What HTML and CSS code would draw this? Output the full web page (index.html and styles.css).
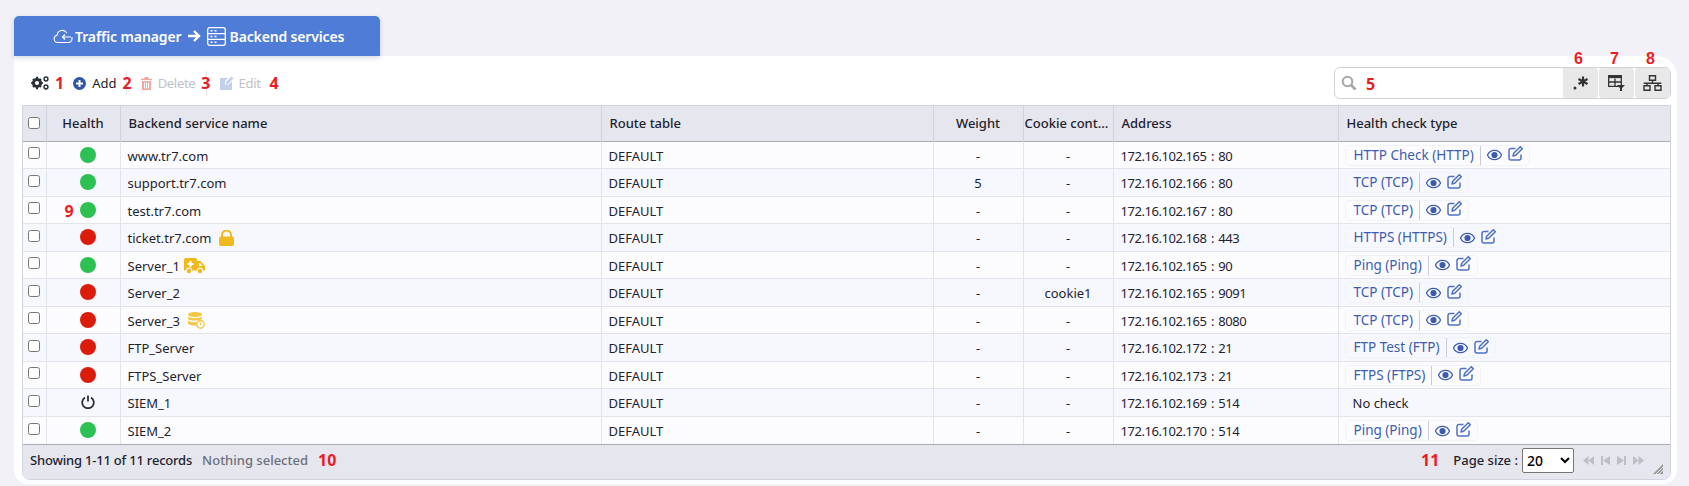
FILE: index.html
```html
<!DOCTYPE html>
<html lang="en">
<head>
  <meta charset="UTF-8">
  <title>Backend services</title>
  <link rel="stylesheet" href="styles.css">
</head>
<body>
  <svg class="defs" width="0" height="0">
    <symbol id="i-eye" viewBox="0 0 16 12"><path d="M8 1C4.500 1 1.800 3 .5 6c1.300 3 4 5 7.500 5s6.200-2 7.500-5C14.200 3 11.500 1 8 1z" fill="none" stroke="currentColor" stroke-width="1.400"/><circle cx="8" cy="6" r="3.300" fill="currentColor"/></symbol>
    <symbol id="i-edit" viewBox="0 0 15 15"><path d="M13 8.500V12a2 2 0 0 1-2 2H3a2 2 0 0 1-2-2V4.500a2 2 0 0 1 2-2h4.500" fill="none" stroke="currentColor" stroke-width="1.500"/><path d="M12.300.7l2 2-6.600 6.600-2.700.7.700-2.700z" fill="none" stroke="currentColor" stroke-width="1.500" stroke-linejoin="round"/></symbol>
  </svg>

  <div class="tab">
    <svg class="tab-cloud" width="20" height="16" viewBox="0 0 20 16"><path d="M6 14.500H4.500a3.700 3.700 0 0 1-.4-7.300A5.200 5.200 0 0 1 13.800 5M9 14.500h6.500a3.500 3.500 0 0 0 3.500-3.500V9" fill="none" stroke="currentColor" stroke-width="1.100"/><path d="M6 14.500h4M9.500 9H18M12 6.500L9.500 9l2.500 2.500" fill="none" stroke="currentColor" stroke-width="1.200"/></svg>
    <span>Traffic manager</span>
    <svg class="tab-arrow" width="14" height="14" viewBox="0 0 14 14"><path d="M1 7h10M7 2l5 5-5 5" fill="none" stroke="currentColor" stroke-width="2.400"/></svg>
    <svg class="tab-server" width="19" height="19" viewBox="0 0 19 19"><rect x=".7" y=".7" width="17.600" height="17.600" rx="2" fill="none" stroke="currentColor" stroke-width="1.300"/><path d="M1 6.700h17M1 12.300h17" stroke="currentColor" stroke-width="1.300"/><path d="M3.500 3.800h2M3.500 9.500h2M3.500 15.200h2M7.500 3.800h2M7.500 9.500h2M7.500 15.200h2" stroke="currentColor" stroke-width="1.400"/></svg>
    <span class="tab-last">Backend services</span>
  </div>

  <div class="card">
    <div class="toolbar">
      <button class="tool tool-gear">
        <svg width="18" height="14" viewBox="0 0 18 14"><circle cx="6" cy="7" r="3.600" fill="none" stroke="#2b2f3a" stroke-width="3"/><path d="M6 .8v2M6 11.200v2M.2 7h2M9.800 7h2M2 3l1.400 1.400M10 3L8.600 4.400M2 11l1.400-1.400M10 11L8.600 9.600" stroke="#2b2f3a" stroke-width="2"/><circle cx="15" cy="3" r="1.900" fill="none" stroke="#2b2f3a" stroke-width="1.500"/><circle cx="15" cy="11" r="1.900" fill="none" stroke="#2b2f3a" stroke-width="1.500"/></svg>
      </button>
      <span class="mark">1</span>
      <button class="tool tool-add">
        <svg width="13" height="13" viewBox="0 0 13 13"><circle cx="6.500" cy="6.500" r="6.500" fill="#2f55a4"/><path d="M6.500 3v7M3 6.500h7" stroke="#fff" stroke-width="2"/></svg>
        Add
      </button>
      <span class="mark">2</span>
      <button class="tool tool-delete" disabled>
        <svg width="11" height="13" viewBox="0 0 11 13"><path d="M0 1.700h11V3H0zM3.500 0h4v1.700h-4z" fill="#f3a6a0"/><path d="M1 4h9v9H1zM3 5.500v6h1v-6zM5 5.500v6h1v-6zM7 5.500v6h1v-6z" fill="#f3a6a0" fill-rule="evenodd"/></svg>
        Delete
      </button>
      <span class="mark">3</span>
      <button class="tool tool-edit" disabled>
        <svg width="15" height="14" viewBox="0 0 15 14"><path d="M1 2h8L6 5v3.500h3.500L13 5.500V14H1z" fill="#c4d0ea"/><path d="M7 6l5.500-5.500 2 2L9 8H7z" fill="#c4d0ea"/></svg>
        Edit
      </button>
      <span class="mark">4</span>

      <div class="search">
        <div class="search-box">
          <svg width="16" height="16" viewBox="0 0 16 16"><circle cx="6.500" cy="6.500" r="4.800" fill="none" stroke="#a6a6a6" stroke-width="2"/><path d="M10 10l4.500 4.500" stroke="#a6a6a6" stroke-width="2.500"/></svg>
          <span class="mark">5</span>
        </div>
        <button class="search-btn">
          <span class="mark mark-top">6</span>
          <svg width="16" height="15" viewBox="0 0 16 15"><circle cx="2" cy="13" r="1.500" fill="#333"/><path d="M10 1.500v10M5.500 4l9 5M14.500 4l-9 5" stroke="#333" stroke-width="2.200"/></svg>
        </button>
        <button class="search-btn">
          <span class="mark mark-top">7</span>
          <svg width="17" height="16" viewBox="0 0 17 16"><path d="M.7.700h12.600v10.600H.7zM7 3.500v7.800M.7 7h12.600" fill="none" stroke="#333" stroke-width="1.300"/><path d="M.7 2h12.600" stroke="#333" stroke-width="2.200"/><path d="M9 10h8l-3 3v3h-2v-3z" fill="#333"/></svg>
        </button>
        <button class="search-btn">
          <span class="mark mark-top">8</span>
          <svg width="19" height="16" viewBox="0 0 19 16"><path d="M6.500.7h6v4.600h-6zM1 10.700h6v4.600H1zM12 10.700h6v4.600h-6zM9.500 5.300v3M.7 8.300h17.600M4 8.300v2.400M15 8.300v2.400" fill="none" stroke="#333" stroke-width="1.400"/></svg>
        </button>
      </div>
    </div>

    <div class="grid">
      <table>
        <colgroup>
          <col class="col-check"><col class="col-health"><col class="col-name"><col class="col-route">
          <col class="col-weight"><col class="col-cookie"><col class="col-address"><col>
        </colgroup>
        <thead>
          <tr>
            <th class="center"><input type="checkbox"></th>
            <th class="center">Health</th>
            <th>Backend service name</th>
            <th>Route table</th>
            <th class="center">Weight</th>
            <th class="cut">Cookie cont...</th>
            <th>Address</th>
            <th>Health check type</th>
          </tr>
        </thead>
        <tbody>
          <tr>
            <td class="center"><input type="checkbox"></td>
            <td class="center"><span class="dot up"></span></td>
            <td>www.tr7.com</td>
            <td>DEFAULT</td><td class="center">-</td><td class="center">-</td>
            <td class="addr">172.16.102.165 : 80</td>
            <td><span class="check"><a>HTTP Check (HTTP)</a><svg class="eye"><use href="#i-eye"/></svg><svg class="pen"><use href="#i-edit"/></svg></span></td>
          </tr>
          <tr>
            <td class="center"><input type="checkbox"></td>
            <td class="center"><span class="dot up"></span></td>
            <td>support.tr7.com</td>
            <td>DEFAULT</td><td class="center">5</td><td class="center">-</td>
            <td class="addr">172.16.102.166 : 80</td>
            <td><span class="check"><a>TCP (TCP)</a><svg class="eye"><use href="#i-eye"/></svg><svg class="pen"><use href="#i-edit"/></svg></span></td>
          </tr>
          <tr>
            <td class="center"><input type="checkbox"></td>
            <td class="center health-cell"><span class="mark mark-nine">9</span><span class="dot up"></span></td>
            <td>test.tr7.com</td>
            <td>DEFAULT</td><td class="center">-</td><td class="center">-</td>
            <td class="addr">172.16.102.167 : 80</td>
            <td><span class="check"><a>TCP (TCP)</a><svg class="eye"><use href="#i-eye"/></svg><svg class="pen"><use href="#i-edit"/></svg></span></td>
          </tr>
          <tr>
            <td class="center"><input type="checkbox"></td>
            <td class="center"><span class="dot down"></span></td>
            <td>ticket.tr7.com <svg class="flag flag-lock" width="15" height="16" viewBox="0 0 15 16"><path d="M3 7V5a4.500 4.500 0 0 1 9 0v2" fill="none" stroke="#f0b91e" stroke-width="2"/><rect y="6.500" width="15" height="9.500" rx="2" fill="#f0b91e"/></svg></td>
            <td>DEFAULT</td><td class="center">-</td><td class="center">-</td>
            <td class="addr">172.16.102.168 : 443</td>
            <td><span class="check"><a>HTTPS (HTTPS)</a><svg class="eye"><use href="#i-eye"/></svg><svg class="pen"><use href="#i-edit"/></svg></span></td>
          </tr>
          <tr>
            <td class="center"><input type="checkbox"></td>
            <td class="center"><span class="dot up"></span></td>
            <td>Server_1 <svg class="flag flag-truck" width="21" height="16" viewBox="0 0 21 16"><path d="M1.500 0h10A1.500 1.500 0 0 1 13 1.500V3h3.500L21 8v4.500h-2a3 3 0 0 0-6 0H8a3 3 0 0 0-6 0H0V1.500A1.500 1.500 0 0 1 1.500 0z" fill="#f0b91e"/><path d="M6.500 3v6M3.500 6h6" stroke="#fff" stroke-width="2"/><path d="M15 5h1l2.500 3H15z" fill="#fff"/><circle cx="5" cy="13" r="2.200" fill="#f0b91e"/><circle cx="16" cy="13" r="2.200" fill="#f0b91e"/></svg></td>
            <td>DEFAULT</td><td class="center">-</td><td class="center">-</td>
            <td class="addr">172.16.102.165 : 90</td>
            <td><span class="check"><a>Ping (Ping)</a><svg class="eye"><use href="#i-eye"/></svg><svg class="pen"><use href="#i-edit"/></svg></span></td>
          </tr>
          <tr>
            <td class="center"><input type="checkbox"></td>
            <td class="center"><span class="dot down"></span></td>
            <td>Server_2</td>
            <td>DEFAULT</td><td class="center">-</td><td class="center">cookie1</td>
            <td class="addr">172.16.102.165 : 9091</td>
            <td><span class="check"><a>TCP (TCP)</a><svg class="eye"><use href="#i-eye"/></svg><svg class="pen"><use href="#i-edit"/></svg></span></td>
          </tr>
          <tr>
            <td class="center"><input type="checkbox"></td>
            <td class="center"><span class="dot down"></span></td>
            <td>Server_3 <svg class="flag flag-db" width="17" height="17" viewBox="0 0 17 17"><ellipse cx="7" cy="2.500" rx="7" ry="2.500" fill="#f2c744"/><path d="M0 4.500c2 2 12 2 14 0v2.500c-2 2-12 2-14 0zM0 8.500c2 2 9 2 10 1.500-1 1-1.500 2-1.500 3.500H7c-3 0-6-.5-7-2z" fill="#f2c744"/><circle cx="12.500" cy="12.500" r="3.700" fill="#fff" stroke="#f2c744" stroke-width="1.400"/><path d="M12.500 10.500v2.500" stroke="#f2c744" stroke-width="1.400"/></svg></td>
            <td>DEFAULT</td><td class="center">-</td><td class="center">-</td>
            <td class="addr">172.16.102.165 : 8080</td>
            <td><span class="check"><a>TCP (TCP)</a><svg class="eye"><use href="#i-eye"/></svg><svg class="pen"><use href="#i-edit"/></svg></span></td>
          </tr>
          <tr>
            <td class="center"><input type="checkbox"></td>
            <td class="center"><span class="dot down"></span></td>
            <td>FTP_Server</td>
            <td>DEFAULT</td><td class="center">-</td><td class="center">-</td>
            <td class="addr">172.16.102.172 : 21</td>
            <td><span class="check"><a>FTP Test (FTP)</a><svg class="eye"><use href="#i-eye"/></svg><svg class="pen"><use href="#i-edit"/></svg></span></td>
          </tr>
          <tr>
            <td class="center"><input type="checkbox"></td>
            <td class="center"><span class="dot down"></span></td>
            <td>FTPS_Server</td>
            <td>DEFAULT</td><td class="center">-</td><td class="center">-</td>
            <td class="addr">172.16.102.173 : 21</td>
            <td><span class="check"><a>FTPS (FTPS)</a><svg class="eye"><use href="#i-eye"/></svg><svg class="pen"><use href="#i-edit"/></svg></span></td>
          </tr>
          <tr>
            <td class="center"><input type="checkbox"></td>
            <td class="center"><svg class="power" width="14" height="14" viewBox="0 0 14 14"><path d="M4 2.500a5.800 5.800 0 1 0 6 0" fill="none" stroke="#2b2f3a" stroke-width="1.800"/><path d="M7 .5v6" stroke="#2b2f3a" stroke-width="1.800"/></svg></td>
            <td>SIEM_1</td>
            <td>DEFAULT</td><td class="center">-</td><td class="center">-</td>
            <td class="addr">172.16.102.169 : 514</td>
            <td class="no-check">No check</td>
          </tr>
          <tr>
            <td class="center"><input type="checkbox"></td>
            <td class="center"><span class="dot up"></span></td>
            <td>SIEM_2</td>
            <td>DEFAULT</td><td class="center">-</td><td class="center">-</td>
            <td class="addr">172.16.102.170 : 514</td>
            <td><span class="check"><a>Ping (Ping)</a><svg class="eye"><use href="#i-eye"/></svg><svg class="pen"><use href="#i-edit"/></svg></span></td>
          </tr>
        </tbody>
      </table>

      <div class="footer">
        <span class="records">Showing 1-11 of 11 records</span>
        <span class="muted">Nothing selected</span>
        <span class="mark">10</span>
        <span class="footer-right">
          <span class="mark">11</span>
          <label>Page size :</label>
          <select><option>20</option></select>
          <span class="pager">
            <svg width="11" height="9" viewBox="0 0 11 9"><path d="M5.500 0v9L0 4.500zM11 0v9L5.500 4.500z"/></svg>
            <svg width="9" height="9" viewBox="0 0 9 9"><path d="M0 0h2v9H0zM9 0v9L2 4.500z"/></svg>
            <svg width="9" height="9" viewBox="0 0 9 9"><path d="M9 0H7v9h2zM0 0v9l7-4.500z"/></svg>
            <svg width="11" height="9" viewBox="0 0 11 9"><path d="M0 0v9l5.500-4.500zM5.500 0v9L11 4.500z"/></svg>
          </span>
        </span>
        <svg class="grip" width="10" height="10" viewBox="0 0 10 10"><path d="M10 0v10H0z" fill="#9a9a9a"/><path d="M3 10L10 3M6 10l4-4" stroke="#e5e6ee" stroke-width="1"/></svg>
      </div>
    </div>
  </div>
</body>
</html>
```

FILE: styles.css
```css
* {
  box-sizing: border-box;
}
html, body {
  height: 100%;
}
body {
  margin: 0;
  padding: 16px 12px 2px 14px;
  background: #f1f1f7;
  font-family: "Noto Sans", "Open Sans", sans-serif;
  font-size: 13px;
  color: #1f232e;
  overflow: hidden;
}
.defs {
  position: absolute;
}
.tab {
  width: 366px;
  height: 40px;
  padding-left: 39px;
  background: #4f7cd6;
  border-radius: 5px 5px 0 0;
  box-shadow: 0 2px 5px rgba(40, 60, 110, 0.2);
  color: #fff;
  font-size: 14px;
  font-weight: 600;
  letter-spacing: -0.1px;
  display: flex;
  align-items: center;
  position: relative;
  z-index: 1;
}
.tab-cloud {
  margin-right: 2px;
}
.tab-arrow {
  margin: 0 6px 0 5px;
}
.tab-server {
  margin-right: 4px;
}
.tab-last {
  letter-spacing: -0.15px;
}
.card {
  background: #fff;
  border-radius: 0 20px 14px 14px;
  height: 428px;
  padding: 0 6px 5px 8px;
}
.toolbar {
  height: 49px;
  padding: 5px 0 0 9px;
  display: flex;
  align-items: center;
}
.tool {
  background: none;
  border: none;
  padding: 0;
  font: inherit;
  color: #1f232e;
  display: flex;
  align-items: center;
  gap: 6px;
  position: relative;
}
.tool:disabled {
  color: #bfc1c8;
}
.tool-delete::before, .tool-edit::before {
  content: "";
  position: absolute;
  top: -3px;
  bottom: -3px;
  width: 1px;
  background: #e4e5ea;
}
.tool-delete::before {
  left: -15px;
}
.tool-edit::before {
  left: -13px;
}
.tool-delete {
  letter-spacing: -0.3px;
}
.tool-edit {
  gap: 5px;
  letter-spacing: -0.3px;
}
.mark {
  font-size: 16px;
  font-weight: 700;
  color: #ed1c24;
  line-height: 1;
  letter-spacing: 0;
  position: relative;
  z-index: 1;
}
.tool-gear + .mark {
  margin: 0 9px 0 6px;
}
.tool-add + .mark {
  margin: 0 9px 0 6px;
}
.tool-delete + .mark {
  margin: 0 8px 0 6px;
}
.tool-edit + .mark {
  margin-left: 9px;
}
.search {
  margin-left: auto;
  width: 337px;
  height: 32px;
  border: 1px solid #cfd1d8;
  border-radius: 6px;
  display: flex;
  gap: 1px;
  margin-top: -1px;
}
.search-box {
  flex: 1;
  display: flex;
  align-items: center;
  gap: 9px;
  padding-left: 6px;
}
.search-box .mark {
  top: 1px;
}
.search-btn {
  width: 35px;
  background: #e8e8e8;
  border: none;
  border-radius: 3px;
  padding: 0;
  display: flex;
  align-items: center;
  justify-content: center;
  position: relative;
}
.search-btn:last-child {
  border-radius: 3px 5px 5px 3px;
}
.search-btn:nth-child(2) {
  border-radius: 0 3px 3px 0;
}
.mark-top {
  position: absolute;
  top: -17px;
  left: 11px;
}
.grid {
  border: 1px solid #cfd3dc;
  border-radius: 0 0 8px 8px;
  overflow: hidden;
}
table {
  width: 100%;
  border-collapse: collapse;
  table-layout: fixed;
}
.col-check { width: 23px; }
.col-health { width: 74px; }
.col-name { width: 481px; }
.col-route { width: 332px; }
.col-weight { width: 90px; }
.col-cookie { width: 90px; }
.col-address { width: 225px; }
thead tr {
  height: 35px;
  background: #e5e6ee;
  border-bottom: 1px solid #a9acb4;
}
th {
  font-weight: 500;
  text-align: left;
  padding: 0 8px;
  border-left: 1px solid #cfd3dc;
}
th:first-child, td:first-child {
  border-left: none;
  padding: 0;
}
th.cut {
  padding: 0 0 0 1px;
  white-space: nowrap;
}
tbody tr {
  height: 27.5px;
  background: #fcfcff;
  border-bottom: 1px solid #e2e4ec;
}
tbody tr:nth-child(even) {
  background: #f7f8fd;
}
tbody tr:last-child {
  border-bottom: none;
}
td {
  padding: 2px 7px 0;
  border-left: 1px solid #e2e4ec;
  white-space: nowrap;
}
td:nth-child(2) {
  padding: 2px 6px 0 16px;
}
.center {
  text-align: center;
}
.addr {
  letter-spacing: -0.45px;
  word-spacing: 1.5px;
}
input[type="checkbox"] {
  width: 12px;
  height: 12px;
  margin: 0;
  vertical-align: middle;
  position: relative;
  top: -2px;
}
td input[type="checkbox"] {
  top: -3px;
}
.dot {
  display: block;
  width: 16px;
  height: 16px;
  border-radius: 50%;
  margin: -2px auto 0;
}
.dot.up {
  background: #2dc052;
}
.dot.down {
  background: #db1c0a;
}
.health-cell {
  position: relative;
}
.mark-nine {
  position: absolute;
  left: 18px;
  top: 6px;
}
.power {
  display: block;
  margin: -2px auto 0;
}
.flag {
  vertical-align: -3px;
  margin-left: 3px;
}
.flag-lock {
  margin-left: 4px;
}
.flag-truck {
  margin-left: 1px;
}
.flag-db {
  margin-left: 5px;
}
.check {
  display: inline-flex;
  align-items: center;
  height: 21px;
  padding: 0 6px 0 7px;
  border: 1px solid #f2f3f9;
  border-radius: 4px;
  color: #3d5caf;
  font-size: 13.5px;
  margin-top: -2px;
  margin-left: -1px;
}
.check a {
  padding-left: 1px;
  padding-right: 6px;
  border-right: 1px solid #c9ccd6;
  line-height: 19px;
  margin-right: 6px;
}
.eye {
  width: 15px;
  height: 12px;
  color: #3d5caf;
  margin-right: 6px;
}
.pen {
  width: 15px;
  height: 15px;
  color: #4f71c4;
  margin-top: -3px;
}
.no-check {
  padding-left: 14px;
}
.footer {
  height: 35px;
  background: #e5e6ee;
  border-top: 1px solid #a9acb4;
  display: flex;
  align-items: center;
  padding: 0 7px 3px;
  position: relative;
  font-weight: 500;
}
.records {
  letter-spacing: -0.2px;
}
.muted {
  color: #6d7079;
  margin-left: 10px;
}
.footer > .mark {
  margin-left: 10px;
}
.footer-right {
  margin-left: auto;
  display: flex;
  align-items: center;
  margin-right: 19px;
}
.footer-right .mark {
  margin-right: 14px;
}
.footer-right label {
  margin-right: 4px;
}
select {
  width: 52px;
  height: 25px;
  font: inherit;
  font-size: 14px;
  background: #fff;
  color: #000;
  border: 1px solid #767676;
  border-radius: 2px;
}
.pager {
  display: flex;
  gap: 7px;
  margin-left: 9px;
  fill: #bdbfc7;
}
.grip {
  position: absolute;
  right: 7px;
  bottom: 5px;
}
```
